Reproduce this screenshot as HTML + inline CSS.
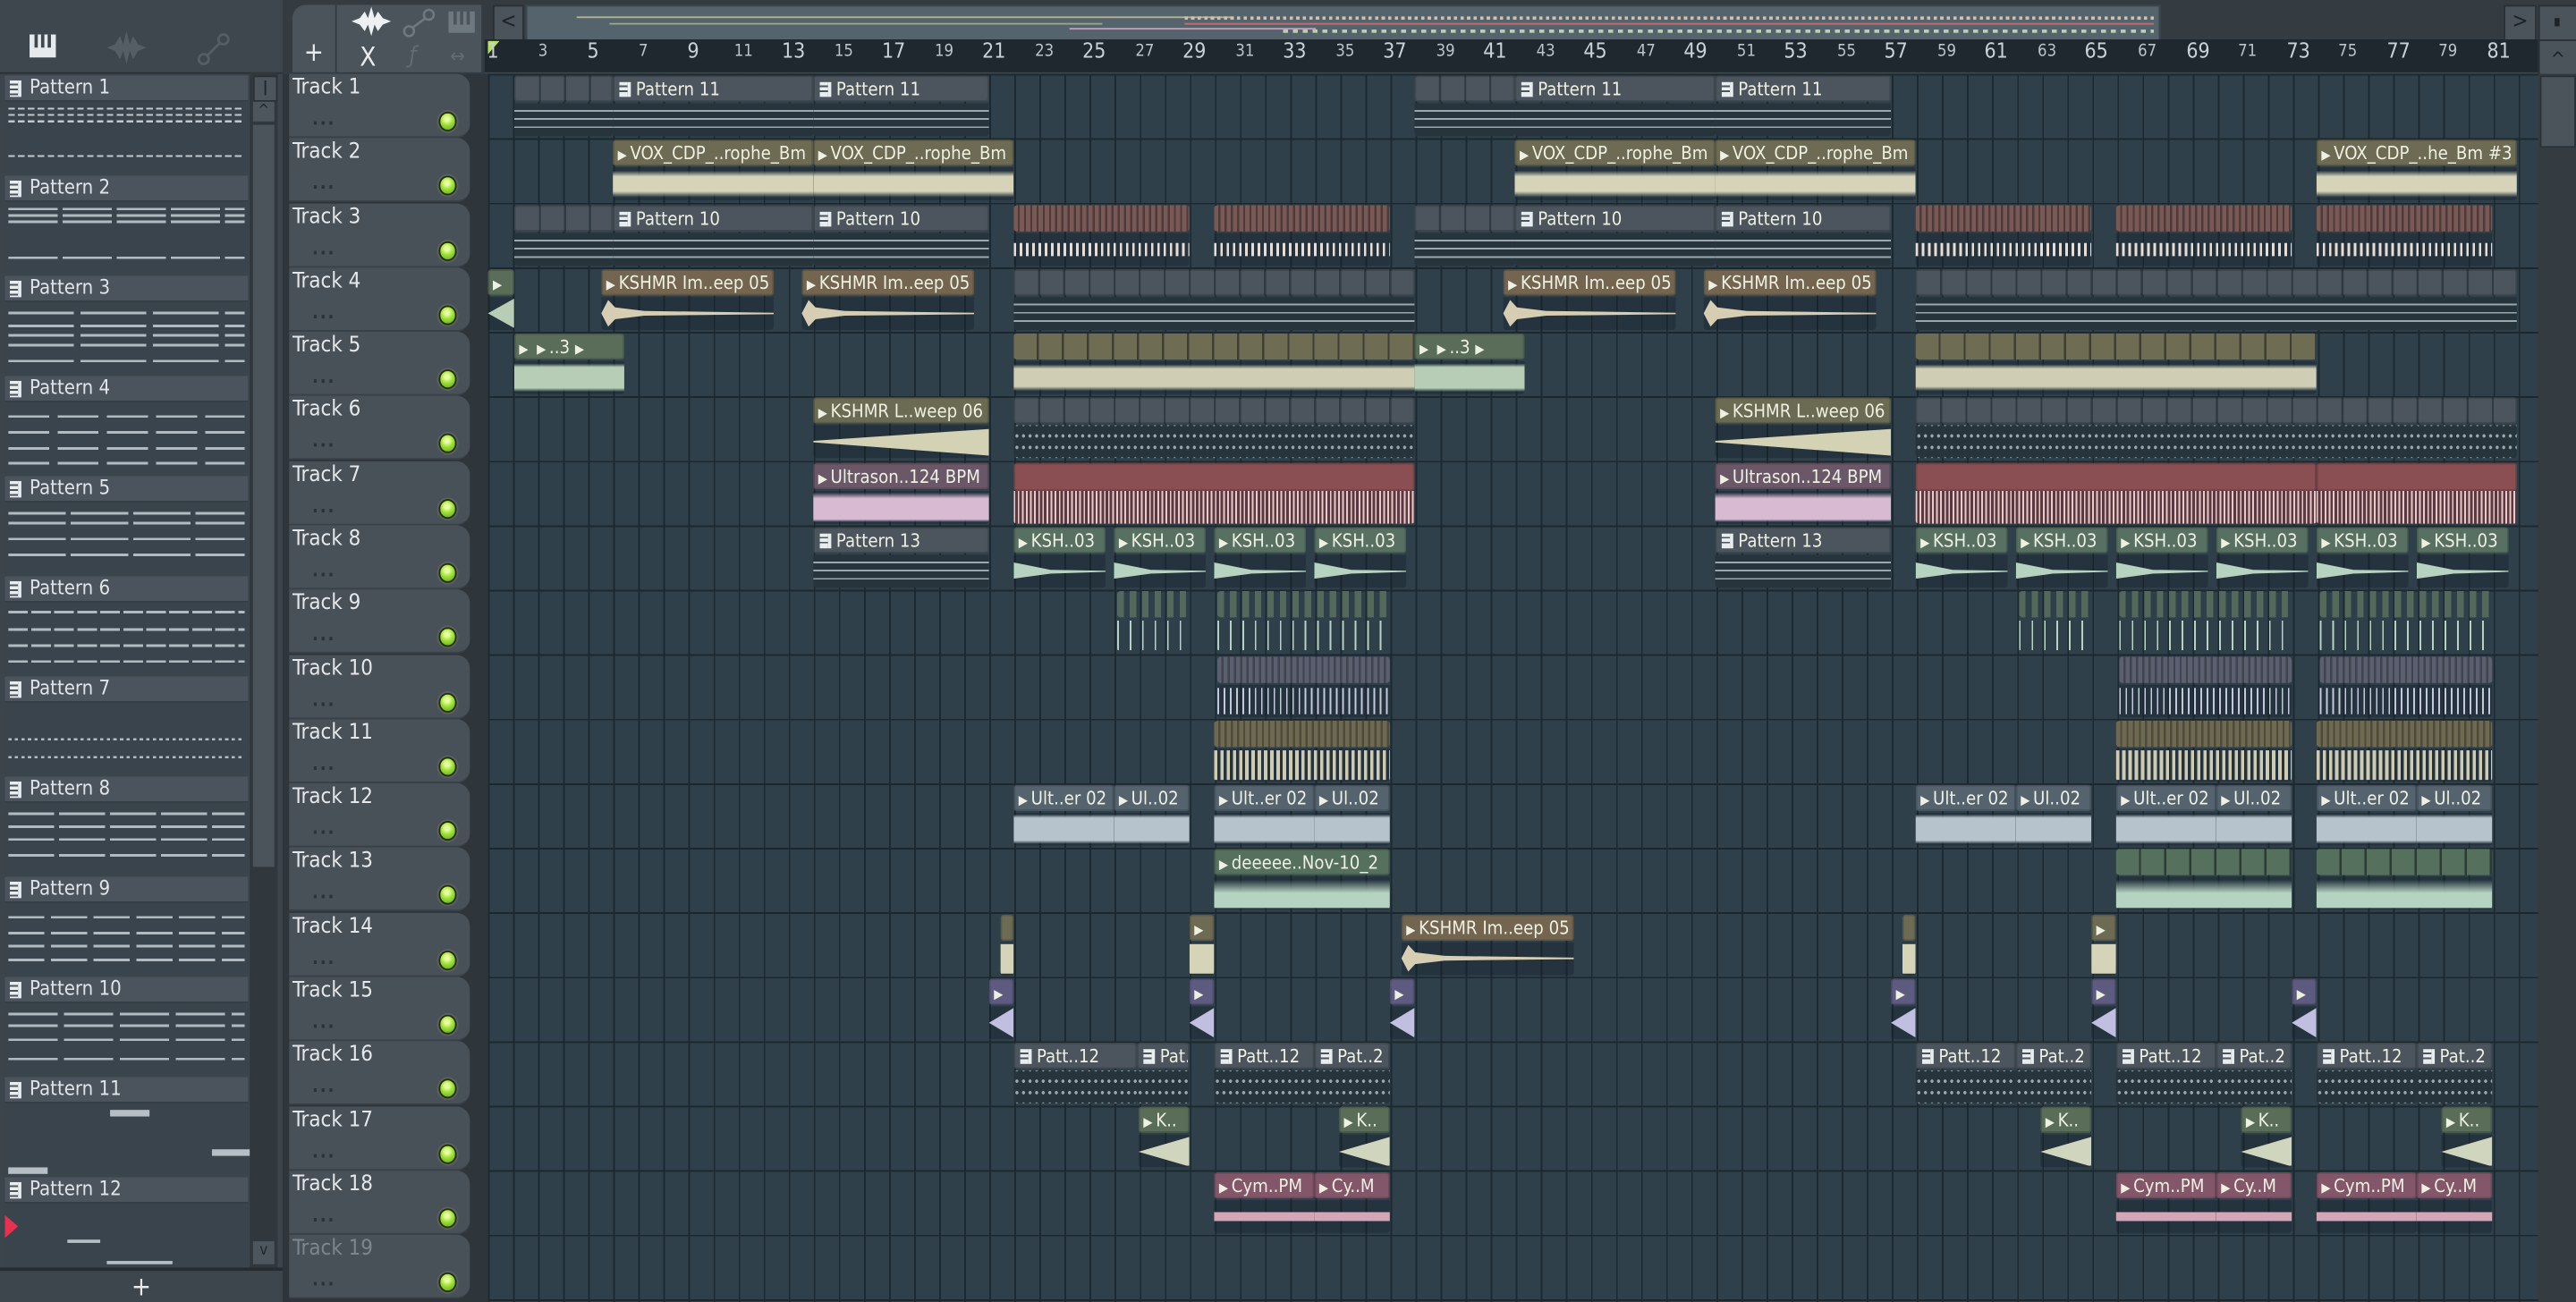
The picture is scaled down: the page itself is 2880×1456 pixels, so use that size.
<!DOCTYPE html>
<html><head><meta charset="utf-8">
<style>
html,body{margin:0;padding:0;background:#2f3a41;overflow:hidden;width:2880px;height:1456px}
#s{position:absolute;left:0;top:0;width:1568px;height:793px;transform:scale(1.83674,1.83607);transform-origin:0 0;background:#343c43;font-family:"DejaVu Sans Condensed","Liberation Sans Narrow","Liberation Sans",sans-serif;font-stretch:condensed;overflow:hidden}
.a{position:absolute}
#lp{left:0;top:0;width:172px;height:793px;background:#3c454c}
#lptop{left:0;top:0;width:172px;height:44px;background:#3f474e;border-bottom:1px solid #2a3137}
.pt{position:absolute;left:3px;width:148px;height:59px;background:#3a444c}
.pt .ph{height:15px;background:#4b545c;border-bottom:1px solid #343d44;color:#dfe4e8;font-size:12px;line-height:15px;padding-left:15px;position:relative}
.pi{position:absolute;left:3px;top:3px;width:7px;height:10px;background:linear-gradient(#e8edf0 0 2px,#4b545c 2px 3px,#e8edf0 3px 5px,#4b545c 5px 6px,#e8edf0 6px 8px,#4b545c 8px 9px,#e8edf0 9px);border-right:2px solid #e8edf0;box-sizing:border-box}
.pb{position:absolute;left:2px;right:2px;top:18px;bottom:2px}
.th{position:absolute;left:176px;width:110px;height:38px;background:#495158;border-radius:0 8px 8px 0;border-bottom:1px solid #3a4147}
.th .n{position:absolute;left:2px;top:1px;font-size:13px;color:#e4e8ea}
.th .d{position:absolute;left:14px;top:21px;font-size:11px;color:#2b3136;letter-spacing:1px;font-weight:bold}
.th .l{position:absolute;left:91px;top:23px;width:9px;height:10px;border-radius:50%;background:radial-gradient(circle at 45% 35%,#e9ffa0 0 15%,#9de23a 45%,#5fa010 100%);border:1px solid #263000;box-shadow:0 0 0 1px #5a6268}
#g{left:297px;top:45px;width:1248px;height:748px;background-color:#2f404b;
background-image:repeating-linear-gradient(90deg,#1d2930 0 1px,transparent 1px 15.26px),repeating-linear-gradient(180deg,#1c272e 0 1px,transparent 1px 39.28px);overflow:hidden}
.r{position:absolute;left:0;width:1248px;height:39.28px}
.c{position:absolute;top:1px;height:37px;overflow:hidden;border-radius:2px}
.c .h{position:absolute;left:0;right:0;top:0;height:16px;font-size:11px;line-height:16px;color:#eef0e2;padding-left:2px;white-space:nowrap;overflow:hidden;border-radius:2px;box-sizing:border-box;border:1px solid rgba(0,0,0,.15)}
.c .b{position:absolute;top:17px;left:0;right:0;bottom:0;background:rgba(25,36,44,.45)}
.w{position:absolute;left:0;right:0;top:1px;bottom:1px}
.ic{font-size:8px;margin-right:2px}
.p .h{background:#4c555d;padding-left:13px}
.p .h:before{content:"";position:absolute;left:3px;top:3px;width:7px;height:9px;background:linear-gradient(#e8edf0 0 2px,#4c555d 2px 3px,#e8edf0 3px 5px,#4c555d 5px 6px,#e8edf0 6px);border-right:2px solid #e8edf0;box-sizing:border-box}
.p .b{background:#27343c;background-image:linear-gradient(transparent 20%,#9aa7b0 20% 25%,transparent 25% 45%,#9aa7b0 45% 50%,transparent 50% 70%,#9aa7b0 70% 75%,transparent 75%)}
.pd .b{background:#27343c;background-image:radial-gradient(circle,#9aa7b0 0 1px,transparent 1px);background-size:4px 7px;background-position:0 3px}
.pm .h{background:repeating-linear-gradient(90deg,#4c555d 0 14px,#2f3a42 14px 15.26px);padding-left:0}
.pm .h:before{display:none}
.vox .h{background:#6d6b53}.vox .w{background:linear-gradient(transparent 5%,#d5d3b8 25% 75%,transparent 95%)}
.ksi .h{background:#73654f}.ksi .w{background:#d6cdb3;clip-path:polygon(0 50%,4% 5%,8% 30%,25% 42%,100% 48%,100% 53%,25% 58%,8% 70%,4% 95%)}
.ksl .h{background:#6b6a52}.ksl .w{background:#d3d2b5;clip-path:polygon(0 45%,100% 5%,100% 95%,0 50%)}
.g .h{background:#596d58}.g .w{background:linear-gradient(transparent 2%,#b8cdb6 15% 85%,transparent 98%)}
.gd .h{background:#596d58}.gd .w{background:#b8cdb6;clip-path:polygon(0 50%,100% 0,100% 100%)}
.k3 .h{background:#587062}.k3 .w{background:#b6d2c1;clip-path:polygon(0 20%,40% 45%,100% 48%,100% 52%,40% 58%,0 75%)}
.ul .h{background:#6a5868}.ul .w{background:linear-gradient(transparent 0%,#d9bad3 20% 90%,transparent 100%)}
.ue .h{background:#55636e}.ue .w{background:linear-gradient(transparent 0%,#b7c3cc 12% 88%,transparent 100%)}
.de .h{background:#56705e}.de .w{background:linear-gradient(transparent 5%,#b6d3c2 50%)}
.cy .h{background:#83566a}.cy .w{background:linear-gradient(transparent 35%,#d3a6b8 35% 65%,transparent 65%)}
.pr .h{background:#5d5c80}.pr .w{background:#c0bfe0;clip-path:polygon(0 50%,100% 0,100% 100%)}
.red .h{background:#8a4f53;height:17px}.red .b{background:repeating-linear-gradient(90deg,#e8c8c8 0 1px,#5a3a40 1px 2.5px)}
.br .h{background:repeating-linear-gradient(90deg,#7a5853 0 2.5px,#4a3c3c 2.5px 3.8px);border:0}.br .w{top:6px;bottom:6px;background:repeating-linear-gradient(90deg,#e8dcd6 0 1.5px,transparent 1.5px 3.8px)}
.ol .h{background:repeating-linear-gradient(90deg,#6e6a52 0 2.5px,#4d4b3c 2.5px 3.8px);border:0}.ol .w{top:1px;bottom:1px;background:repeating-linear-gradient(90deg,#cfcbb1 0 2px,transparent 2px 3.8px)}
.pu .h{background:repeating-linear-gradient(90deg,#5b5f70 0 2.5px,#40444f 2.5px 3.8px);border:0}.pu .w{top:2px;bottom:2px;background:repeating-linear-gradient(90deg,#c5c8dc 0 1px,transparent 1px 3.8px)}
.gb .h{background:repeating-linear-gradient(90deg,#54695a 0 4px,transparent 4px 7.6px);border:0}.gb .b{background:transparent}.gb .w{background:repeating-linear-gradient(90deg,#b6d2c1 0 1px,transparent 1px 7.6px)}
.gm .h{background:repeating-linear-gradient(90deg,#6e6c53 0 14px,#3b3f35 14px 15.26px);border:0}
.gm .w{background:linear-gradient(transparent 5%,#cfceb5 20% 80%,transparent 95%)}
.sm .h{background:repeating-linear-gradient(90deg,#56705e 0 14px,#2f3a36 14px 15.26px);border:0}
.ru{position:absolute;top:26px;font-size:10px;color:#b9c4cb;transform:translateX(-50%)}
.ru.big{font-size:12.5px;top:23px;color:#c8d2d8}
</style></head><body><div id="s">

<div id="lp" class="a"></div>
<div id="lptop" class="a">
 <div class="a" style="left:18px;top:21px;width:16px;height:14px;background:#e6eaec"><div class="a" style="left:3px;top:0;width:2px;height:8px;background:#3f474e"></div><div class="a" style="left:7px;top:0;width:2px;height:8px;background:#3f474e"></div><div class="a" style="left:11px;top:0;width:2px;height:8px;background:#3f474e"></div></div>
 <svg class="a" style="left:64px;top:18px" width="26" height="22" viewBox="0 0 26 22"><path d="M1 11 L6 9 L9 4 L11 9 L13 1 L15 9 L17 4 L20 9 L25 11 L20 13 L17 18 L15 13 L13 21 L11 13 L9 18 L6 13 Z" fill="#555e65"/></svg>
 <svg class="a" style="left:120px;top:20px" width="20" height="20" viewBox="0 0 20 20"><circle cx="4" cy="16" r="3" fill="none" stroke="#555e65" stroke-width="1.5"/><circle cx="16" cy="4" r="3" fill="none" stroke="#555e65" stroke-width="1.5"/><line x1="6" y1="14" x2="14" y2="6" stroke="#555e65" stroke-width="1.5"/></svg>
</div>
<div class="pt" style="top:46px"><div class="ph"><span class="pi"></span>Pattern 1</div><div class="pb" style="background:linear-gradient(transparent 4%,#c0c8ce 4% 7%,transparent 7% 14%,#c0c8ce 14% 17%,transparent 17% 24%,#c0c8ce 24% 27%,transparent 27% 78%,#c0c8ce 78% 81%,transparent 81%);-webkit-mask:repeating-linear-gradient(90deg,#000 0 4px,transparent 4px 6px)"></div></div>
<div class="pt" style="top:107px"><div class="ph"><span class="pi"></span>Pattern 2</div><div class="pb" style="background:linear-gradient(transparent 4%,#b0bac0 4% 8%,transparent 8% 14%,#b0bac0 14% 18%,transparent 18% 24%,#b0bac0 24% 28%,transparent 28% 80%,#b0bac0 80% 84%,transparent 84%);-webkit-mask:repeating-linear-gradient(90deg,#000 0 30px,transparent 30px 33px)"></div></div>
<div class="pt" style="top:168px"><div class="ph"><span class="pi"></span>Pattern 3</div><div class="pb" style="background:linear-gradient(transparent 10%,#b0bac0 10% 14%,transparent 14% 30%,#b0bac0 30% 34%,transparent 34% 45%,#b0bac0 45% 49%,transparent 49% 60%,#b0bac0 60% 64%,transparent 64% 85%,#b0bac0 85% 89%,transparent 89%);-webkit-mask:repeating-linear-gradient(90deg,#000 0 40px,transparent 40px 44px)"></div></div>
<div class="pt" style="top:229px"><div class="ph"><span class="pi"></span>Pattern 4</div><div class="pb" style="background:linear-gradient(transparent 15%,#b0bac0 15% 19%,transparent 19% 40%,#b0bac0 40% 44%,transparent 44% 65%,#b0bac0 65% 69%,transparent 69% 88%,#b0bac0 88% 92%,transparent 92%);-webkit-mask:repeating-linear-gradient(90deg,#000 0 25px,transparent 25px 30px)"></div></div>
<div class="pt" style="top:290px"><div class="ph"><span class="pi"></span>Pattern 5</div><div class="pb" style="background:linear-gradient(transparent 10%,#b0bac0 10% 14%,transparent 14% 25%,#b0bac0 25% 29%,transparent 29% 50%,#b0bac0 50% 54%,transparent 54% 75%,#b0bac0 75% 79%,transparent 79%);-webkit-mask:repeating-linear-gradient(90deg,#000 0 35px,transparent 35px 38px)"></div></div>
<div class="pt" style="top:351px"><div class="ph"><span class="pi"></span>Pattern 6</div><div class="pb" style="background:linear-gradient(transparent 8%,#b0bac0 8% 12%,transparent 12% 35%,#b0bac0 35% 39%,transparent 39% 60%,#b0bac0 60% 64%,transparent 64% 85%,#b0bac0 85% 89%,transparent 89%);-webkit-mask:repeating-linear-gradient(90deg,#000 0 12px,transparent 12px 14px)"></div></div>
<div class="pt" style="top:412px"><div class="ph"><span class="pi"></span>Pattern 7</div><div class="pb" style="background:linear-gradient(transparent 50%,#b0bac0 50% 54%,transparent 54% 78%,#b0bac0 78% 82%,transparent 82%);-webkit-mask:repeating-linear-gradient(90deg,#000 0 2px,transparent 2px 4px)"></div></div>
<div class="pt" style="top:473px"><div class="ph"><span class="pi"></span>Pattern 8</div><div class="pb" style="background:linear-gradient(transparent 10%,#b0bac0 10% 14%,transparent 14% 30%,#b0bac0 30% 34%,transparent 34% 50%,#b0bac0 50% 54%,transparent 54% 75%,#b0bac0 75% 79%,transparent 79%);-webkit-mask:repeating-linear-gradient(90deg,#000 0 28px,transparent 28px 31px)"></div></div>
<div class="pt" style="top:534px"><div class="ph"><span class="pi"></span>Pattern 9</div><div class="pb" style="background:linear-gradient(transparent 15%,#b0bac0 15% 19%,transparent 19% 40%,#b0bac0 40% 44%,transparent 44% 60%,#b0bac0 60% 64%,transparent 64% 82%,#b0bac0 82% 86%,transparent 86%);-webkit-mask:repeating-linear-gradient(90deg,#000 0 22px,transparent 22px 26px)"></div></div>
<div class="pt" style="top:595px"><div class="ph"><span class="pi"></span>Pattern 10</div><div class="pb" style="background:linear-gradient(transparent 10%,#b0bac0 10% 14%,transparent 14% 28%,#b0bac0 28% 32%,transparent 32% 50%,#b0bac0 50% 54%,transparent 54% 80%,#b0bac0 80% 84%,transparent 84%);-webkit-mask:repeating-linear-gradient(90deg,#000 0 30px,transparent 30px 34px)"></div></div>
<div class="pt" style="top:656px"><div class="ph"><span class="pi"></span>Pattern 11</div><div class="pb"><div class="a" style="left:62px;top:2px;width:24px;height:4px;background:#b5bfc5"></div><div class="a" style="left:124px;top:26px;width:24px;height:4px;background:#b5bfc5"></div><div class="a" style="left:0;top:37px;width:24px;height:4px;background:#b5bfc5"></div></div></div>
<div class="pt" style="top:717px;height:54px"><div class="ph"><span class="pi"></span>Pattern 12</div><div class="pb"><div class="a" style="left:36px;top:20px;width:20px;height:2px;background:#b5bfc5"></div><div class="a" style="left:60px;top:33px;width:40px;height:2px;background:#b5bfc5"></div></div></div>
<div class="a" style="left:3px;top:740px;width:0;height:0;border-left:8px solid #e83050;border-top:7px solid transparent;border-bottom:7px solid transparent"></div>
<div class="a" style="left:152px;top:44px;width:17px;height:728px;background:#30383e"></div>
<div class="a" style="left:154px;top:46px;width:13px;height:14px;background:#4d565d;border:1px solid #2a3136"><div class="a" style="left:6px;top:2px;width:1px;height:9px;background:#20272b"></div></div>
<div class="a" style="left:154px;top:62px;width:13px;height:12px;background:#4d565d;color:#20272b;font-size:9px;text-align:center;line-height:12px">^</div>
<div class="a" style="left:154px;top:76px;width:13px;height:452px;background:#4b545b"></div>
<div class="a" style="left:154px;top:756px;width:13px;height:14px;background:#4d565d;color:#20272b;font-size:9px;text-align:center;line-height:12px">v</div>
<div class="a" style="left:0;top:772px;width:172px;height:21px;background:#3d464d;border-top:2px solid #262d32;color:#e6eaec;font-size:16px;text-align:center;line-height:20px">+</div>

<div class="a" style="left:172px;top:0;width:1396px;height:45px;background:#343c42"></div>
<div class="a" style="left:178px;top:3px;width:26px;height:41px;background:#4b545b;border-radius:8px 0 0 0;color:#e8ecee;font-size:16px;text-align:center;line-height:58px">+</div>
<div class="a" style="left:205px;top:3px;width:88px;height:41px;background:#4b545b"></div>
<svg class="a" style="left:213px;top:4px" width="26" height="18" viewBox="0 0 26 18"><path d="M1 9 L6 7 L9 3 L11 7 L13 0 L15 7 L17 3 L20 7 L25 9 L20 11 L17 15 L15 11 L13 18 L11 11 L9 15 L6 11 Z" fill="#eef1f3"/></svg>
<svg class="a" style="left:245px;top:5px" width="20" height="18" viewBox="0 0 20 18"><circle cx="4" cy="14" r="3" fill="none" stroke="#6e787f" stroke-width="1.4"/><circle cx="16" cy="4" r="3" fill="none" stroke="#6e787f" stroke-width="1.4"/><line x1="6" y1="12" x2="14" y2="6" stroke="#6e787f" stroke-width="1.4"/></svg>
<div class="a" style="left:273px;top:7px;width:16px;height:13px;background:#6e787f"><div class="a" style="left:3px;top:0;width:2px;height:8px;background:#4b545b"></div><div class="a" style="left:7px;top:0;width:2px;height:8px;background:#4b545b"></div><div class="a" style="left:11px;top:0;width:2px;height:8px;background:#4b545b"></div></div>
<div class="a" style="left:219px;top:25px;color:#e8ecee;font-size:16px">X</div>
<div class="a" style="left:249px;top:26px;color:#626c73;font-size:14px;font-style:italic">ƒ</div>
<div class="a" style="left:274px;top:27px;color:#626c73;font-size:12px">↔</div>
<div class="a" style="left:300px;top:3px;width:17px;height:20px;background:#4b545b;border:1px solid #2a3136;color:#1d2327;font-size:13px;text-align:center;line-height:20px">&lt;</div>
<div class="a" style="left:320px;top:3px;width:993px;height:20px;background:#55636c;border:1px solid #3b464d">
 <div class="a" style="left:30px;top:6px;width:400px;height:1px;background:#b5b58a"></div>
 <div class="a" style="left:50px;top:10px;width:300px;height:1px;background:#9aa98a"></div>
 <div class="a" style="left:330px;top:13px;width:150px;height:1px;background:#c0a0b8"></div>
 <div class="a" style="left:400px;top:6px;width:590px;height:2px;background:repeating-linear-gradient(90deg,#d0c0b0 0 2px,transparent 2px 4px)"></div>
 <div class="a" style="left:400px;top:10px;width:590px;height:1px;background:#c07070"></div>
 <div class="a" style="left:460px;top:14px;width:530px;height:2px;background:repeating-linear-gradient(90deg,#bcd0b0 0 3px,transparent 3px 6px)"></div>
</div>
<div class="a" style="left:1524px;top:3px;width:18px;height:20px;background:#4b545b;border:1px solid #2a3136;color:#1d2327;font-size:13px;text-align:center;line-height:20px">&gt;</div>
<div class="a" style="left:1545px;top:3px;width:22px;height:20px;background:#4b545b;border:1px solid #2a3136"><div class="a" style="left:9px;top:7px;width:3px;height:5px;background:#1d2327"></div></div>

<div class="a" style="left:295px;top:24px;width:1250px;height:20px;background:#1f282e;border-bottom:2px solid #3a454c"></div>
<div class="a" style="left:297px;top:25px;width:0;height:0;border-left:7px solid #b6e060;border-bottom:8px solid transparent"></div>
<span class="ru big" style="left:300px">1</span><span class="ru" style="left:330.5px">3</span><span class="ru big" style="left:361px">5</span><span class="ru" style="left:391.6px">7</span><span class="ru big" style="left:422px">9</span><span class="ru" style="left:452.6px">11</span><span class="ru big" style="left:483px">13</span><span class="ru" style="left:513.6px">15</span><span class="ru big" style="left:544px">17</span><span class="ru" style="left:574.7px">19</span><span class="ru big" style="left:605px">21</span><span class="ru" style="left:635.7px">23</span><span class="ru big" style="left:666px">25</span><span class="ru" style="left:696.8px">27</span><span class="ru big" style="left:727px">29</span><span class="ru" style="left:757.8px">31</span><span class="ru big" style="left:788px">33</span><span class="ru" style="left:818.8px">35</span><span class="ru big" style="left:849px">37</span><span class="ru" style="left:879.9px">39</span><span class="ru big" style="left:910px">41</span><span class="ru" style="left:940.9px">43</span><span class="ru big" style="left:971px">45</span><span class="ru" style="left:1002px">47</span><span class="ru big" style="left:1032px">49</span><span class="ru" style="left:1063px">51</span><span class="ru big" style="left:1093px">53</span><span class="ru" style="left:1124px">55</span><span class="ru big" style="left:1154px">57</span><span class="ru" style="left:1185px">59</span><span class="ru big" style="left:1215px">61</span><span class="ru" style="left:1246px">63</span><span class="ru big" style="left:1276px">65</span><span class="ru" style="left:1307px">67</span><span class="ru big" style="left:1338px">69</span><span class="ru" style="left:1368px">71</span><span class="ru big" style="left:1399px">73</span><span class="ru" style="left:1429px">75</span><span class="ru big" style="left:1460px">77</span><span class="ru" style="left:1490px">79</span><span class="ru big" style="left:1521px">81</span>
<div class="a" style="left:1545px;top:24px;width:22px;height:20px;background:#4b545b;border:1px solid #2a3136;color:#1d2327;font-size:12px;text-align:center;line-height:22px">^</div>
<div class="a" style="left:1545px;top:45px;width:23px;height:748px;background:#343c42"></div>
<div class="a" style="left:1546px;top:46px;width:20px;height:42px;background:#4b545b;border:1px solid #2a3136"></div>

<div class="a" style="left:172px;top:45px;width:125px;height:748px;background:#2e363c"></div>
<div class="th" style="top:45px"><span class="n">Track 1</span><span class="d">...</span><span class="l"></span></div>
<div class="th" style="top:84.3px"><span class="n">Track 2</span><span class="d">...</span><span class="l"></span></div>
<div class="th" style="top:123.6px"><span class="n">Track 3</span><span class="d">...</span><span class="l"></span></div>
<div class="th" style="top:162.8px"><span class="n">Track 4</span><span class="d">...</span><span class="l"></span></div>
<div class="th" style="top:202.1px"><span class="n">Track 5</span><span class="d">...</span><span class="l"></span></div>
<div class="th" style="top:241.4px"><span class="n">Track 6</span><span class="d">...</span><span class="l"></span></div>
<div class="th" style="top:280.7px"><span class="n">Track 7</span><span class="d">...</span><span class="l"></span></div>
<div class="th" style="top:320px"><span class="n">Track 8</span><span class="d">...</span><span class="l"></span></div>
<div class="th" style="top:359.2px"><span class="n">Track 9</span><span class="d">...</span><span class="l"></span></div>
<div class="th" style="top:398.5px"><span class="n">Track 10</span><span class="d">...</span><span class="l"></span></div>
<div class="th" style="top:437.8px"><span class="n">Track 11</span><span class="d">...</span><span class="l"></span></div>
<div class="th" style="top:477.1px"><span class="n">Track 12</span><span class="d">...</span><span class="l"></span></div>
<div class="th" style="top:516.4px"><span class="n">Track 13</span><span class="d">...</span><span class="l"></span></div>
<div class="th" style="top:555.6px"><span class="n">Track 14</span><span class="d">...</span><span class="l"></span></div>
<div class="th" style="top:594.9px"><span class="n">Track 15</span><span class="d">...</span><span class="l"></span></div>
<div class="th" style="top:634.2px"><span class="n">Track 16</span><span class="d">...</span><span class="l"></span></div>
<div class="th" style="top:673.5px"><span class="n">Track 17</span><span class="d">...</span><span class="l"></span></div>
<div class="th" style="top:712.8px"><span class="n">Track 18</span><span class="d">...</span><span class="l"></span></div>
<div class="th" style="top:752px"><span class="n" style="color:#7d868c">Track 19</span><span class="d">...</span><span class="l"></span></div>

<div id="g" class="a">
<div class="r" style="top:0">
<div class="c p pm" style="left:16px;width:60px"><div class="h"></div><div class="b"></div></div>
<div class="c p" style="left:76px;width:122px"><div class="h">Pattern 11</div><div class="b"></div></div>
<div class="c p" style="left:198px;width:107px"><div class="h">Pattern 11</div><div class="b"></div></div>
<div class="c p pm" style="left:564px;width:61px"><div class="h"></div><div class="b"></div></div>
<div class="c p" style="left:625px;width:122px"><div class="h">Pattern 11</div><div class="b"></div></div>
<div class="c p" style="left:747px;width:107px"><div class="h">Pattern 11</div><div class="b"></div></div>
</div>
<div class="r" style="top:39.28px">
<div class="c vox" style="left:76px;width:122px"><div class="h"><span class="ic">▶</span>VOX_CDP_..rophe_Bm</div><div class="b"><div class="w"></div></div></div>
<div class="c vox" style="left:198px;width:122px"><div class="h"><span class="ic">▶</span>VOX_CDP_..rophe_Bm</div><div class="b"><div class="w"></div></div></div>
<div class="c vox" style="left:625px;width:122px"><div class="h"><span class="ic">▶</span>VOX_CDP_..rophe_Bm</div><div class="b"><div class="w"></div></div></div>
<div class="c vox" style="left:747px;width:122px"><div class="h"><span class="ic">▶</span>VOX_CDP_..rophe_Bm</div><div class="b"><div class="w"></div></div></div>
<div class="c vox" style="left:1113px;width:122px"><div class="h"><span class="ic">▶</span>VOX_CDP_..he_Bm #3</div><div class="b"><div class="w"></div></div></div>
</div>
<div class="r" style="top:78.56px">
<div class="c p pm" style="left:16px;width:60px"><div class="h"></div><div class="b"></div></div>
<div class="c p" style="left:76px;width:122px"><div class="h">Pattern 10</div><div class="b"></div></div>
<div class="c p" style="left:198px;width:107px"><div class="h">Pattern 10</div><div class="b"></div></div>
<div class="c br" style="left:320px;width:107px"><div class="h"></div><div class="b"><div class="w"></div></div></div>
<div class="c br" style="left:442px;width:107px"><div class="h"></div><div class="b"><div class="w"></div></div></div>
<div class="c p pm" style="left:564px;width:61px"><div class="h"></div><div class="b"></div></div>
<div class="c p" style="left:625px;width:122px"><div class="h">Pattern 10</div><div class="b"></div></div>
<div class="c p" style="left:747px;width:107px"><div class="h">Pattern 10</div><div class="b"></div></div>
<div class="c br" style="left:869px;width:107px"><div class="h"></div><div class="b"><div class="w"></div></div></div>
<div class="c br" style="left:991px;width:107px"><div class="h"></div><div class="b"><div class="w"></div></div></div>
<div class="c br" style="left:1113px;width:107px"><div class="h"></div><div class="b"><div class="w"></div></div></div>
</div>
<div class="r" style="top:117.84px">
<div class="c gd" style="left:0;width:16px"><div class="h"><span class="ic">▶</span></div><div class="b"><div class="w"></div></div></div>
<div class="c ksi" style="left:69px;width:105px"><div class="h"><span class="ic">▶</span>KSHMR Im..eep 05</div><div class="b"><div class="w"></div></div></div>
<div class="c ksi" style="left:191px;width:105px"><div class="h"><span class="ic">▶</span>KSHMR Im..eep 05</div><div class="b"><div class="w"></div></div></div>
<div class="c p pm" style="left:320px;width:244px"><div class="h"></div><div class="b"></div></div>
<div class="c ksi" style="left:618px;width:105px"><div class="h"><span class="ic">▶</span>KSHMR Im..eep 05</div><div class="b"><div class="w"></div></div></div>
<div class="c ksi" style="left:740px;width:105px"><div class="h"><span class="ic">▶</span>KSHMR Im..eep 05</div><div class="b"><div class="w"></div></div></div>
<div class="c p pm" style="left:869px;width:366px"><div class="h"></div><div class="b"></div></div>
</div>
<div class="r" style="top:157.12px">
<div class="c g" style="left:16px;width:67px"><div class="h"><span class="ic">▶</span> <span class="ic">▶</span>..3 <span class="ic">▶</span></div><div class="b"><div class="w"></div></div></div>
<div class="c gm" style="left:320px;width:244px"><div class="h"></div><div class="b"><div class="w"></div></div></div>
<div class="c g" style="left:564px;width:67px"><div class="h"><span class="ic">▶</span> <span class="ic">▶</span>..3 <span class="ic">▶</span></div><div class="b"><div class="w"></div></div></div>
<div class="c gm" style="left:869px;width:244px"><div class="h"></div><div class="b"><div class="w"></div></div></div>
</div>
<div class="r" style="top:196.4px">
<div class="c ksl" style="left:198px;width:107px"><div class="h"><span class="ic">▶</span>KSHMR L..weep 06</div><div class="b"><div class="w"></div></div></div>
<div class="c p pm pd" style="left:320px;width:244px"><div class="h"></div><div class="b"></div></div>
<div class="c ksl" style="left:747px;width:107px"><div class="h"><span class="ic">▶</span>KSHMR L..weep 06</div><div class="b"><div class="w"></div></div></div>
<div class="c p pm pd" style="left:869px;width:366px"><div class="h"></div><div class="b"></div></div>
</div>
<div class="r" style="top:235.68px">
<div class="c ul" style="left:198px;width:107px"><div class="h"><span class="ic">▶</span>Ultrason..124 BPM</div><div class="b"><div class="w"></div></div></div>
<div class="c red" style="left:320px;width:244px"><div class="h"></div><div class="b"></div></div>
<div class="c ul" style="left:747px;width:107px"><div class="h"><span class="ic">▶</span>Ultrason..124 BPM</div><div class="b"><div class="w"></div></div></div>
<div class="c red" style="left:869px;width:244px"><div class="h"></div><div class="b"></div></div>
<div class="c red" style="left:1113px;width:122px"><div class="h"></div><div class="b"></div></div>
</div>
<div class="r" style="top:274.96px">
<div class="c p" style="left:198px;width:107px"><div class="h">Pattern 13</div><div class="b"></div></div>
<div class="c k3" style="left:320px;width:56px"><div class="h"><span class="ic">▶</span>KSH..03</div><div class="b"><div class="w"></div></div></div>
<div class="c k3" style="left:381px;width:56px"><div class="h"><span class="ic">▶</span>KSH..03</div><div class="b"><div class="w"></div></div></div>
<div class="c k3" style="left:442px;width:56px"><div class="h"><span class="ic">▶</span>KSH..03</div><div class="b"><div class="w"></div></div></div>
<div class="c k3" style="left:503px;width:56px"><div class="h"><span class="ic">▶</span>KSH..03</div><div class="b"><div class="w"></div></div></div>
<div class="c p" style="left:747px;width:107px"><div class="h">Pattern 13</div><div class="b"></div></div>
<div class="c k3" style="left:869px;width:56px"><div class="h"><span class="ic">▶</span>KSH..03</div><div class="b"><div class="w"></div></div></div>
<div class="c k3" style="left:930px;width:56px"><div class="h"><span class="ic">▶</span>KSH..03</div><div class="b"><div class="w"></div></div></div>
<div class="c k3" style="left:991px;width:56px"><div class="h"><span class="ic">▶</span>KSH..03</div><div class="b"><div class="w"></div></div></div>
<div class="c k3" style="left:1052px;width:56px"><div class="h"><span class="ic">▶</span>KSH..03</div><div class="b"><div class="w"></div></div></div>
<div class="c k3" style="left:1113px;width:56px"><div class="h"><span class="ic">▶</span>KSH..03</div><div class="b"><div class="w"></div></div></div>
<div class="c k3" style="left:1174px;width:56px"><div class="h"><span class="ic">▶</span>KSH..03</div><div class="b"><div class="w"></div></div></div>
</div>
<div class="r" style="top:314.24px">
<div class="c gb" style="left:383px;width:44px"><div class="h"></div><div class="b"><div class="w"></div></div></div>
<div class="c gb" style="left:444px;width:105px"><div class="h"></div><div class="b"><div class="w"></div></div></div>
<div class="c gb" style="left:932px;width:44px"><div class="h"></div><div class="b"><div class="w"></div></div></div>
<div class="c gb" style="left:993px;width:105px"><div class="h"></div><div class="b"><div class="w"></div></div></div>
<div class="c gb" style="left:1115px;width:105px"><div class="h"></div><div class="b"><div class="w"></div></div></div>
</div>
<div class="r" style="top:353.52px">
<div class="c pu" style="left:444px;width:105px"><div class="h"></div><div class="b"><div class="w"></div></div></div>
<div class="c pu" style="left:993px;width:105px"><div class="h"></div><div class="b"><div class="w"></div></div></div>
<div class="c pu" style="left:1115px;width:105px"><div class="h"></div><div class="b"><div class="w"></div></div></div>
</div>
<div class="r" style="top:392.8px">
<div class="c ol" style="left:442px;width:107px"><div class="h"></div><div class="b"><div class="w"></div></div></div>
<div class="c ol" style="left:991px;width:107px"><div class="h"></div><div class="b"><div class="w"></div></div></div>
<div class="c ol" style="left:1113px;width:107px"><div class="h"></div><div class="b"><div class="w"></div></div></div>
</div>
<div class="r" style="top:432.08px">
<div class="c ue" style="left:320px;width:61px"><div class="h"><span class="ic">▶</span>Ult..er 02</div><div class="b"><div class="w"></div></div></div>
<div class="c ue" style="left:381px;width:46px"><div class="h"><span class="ic">▶</span>Ul..02</div><div class="b"><div class="w"></div></div></div>
<div class="c ue" style="left:442px;width:61px"><div class="h"><span class="ic">▶</span>Ult..er 02</div><div class="b"><div class="w"></div></div></div>
<div class="c ue" style="left:503px;width:46px"><div class="h"><span class="ic">▶</span>Ul..02</div><div class="b"><div class="w"></div></div></div>
<div class="c ue" style="left:869px;width:61px"><div class="h"><span class="ic">▶</span>Ult..er 02</div><div class="b"><div class="w"></div></div></div>
<div class="c ue" style="left:930px;width:46px"><div class="h"><span class="ic">▶</span>Ul..02</div><div class="b"><div class="w"></div></div></div>
<div class="c ue" style="left:991px;width:61px"><div class="h"><span class="ic">▶</span>Ult..er 02</div><div class="b"><div class="w"></div></div></div>
<div class="c ue" style="left:1052px;width:46px"><div class="h"><span class="ic">▶</span>Ul..02</div><div class="b"><div class="w"></div></div></div>
<div class="c ue" style="left:1113px;width:61px"><div class="h"><span class="ic">▶</span>Ult..er 02</div><div class="b"><div class="w"></div></div></div>
<div class="c ue" style="left:1174px;width:46px"><div class="h"><span class="ic">▶</span>Ul..02</div><div class="b"><div class="w"></div></div></div>
</div>
<div class="r" style="top:471.36px">
<div class="c de" style="left:442px;width:107px"><div class="h"><span class="ic">▶</span>deeeee..Nov-10_2</div><div class="b"><div class="w"></div></div></div>
<div class="c de sm" style="left:991px;width:107px"><div class="h"></div><div class="b"><div class="w"></div></div></div>
<div class="c de sm" style="left:1113px;width:107px"><div class="h"></div><div class="b"><div class="w"></div></div></div>
</div>
<div class="r" style="top:510.64px">
<div class="c vox" style="left:312px;width:8px"><div class="h"></div><div class="b"><div class="w" style="background:#d5d3b8"></div></div></div>
<div class="c vox" style="left:427px;width:15px"><div class="h"><span class="ic">▶</span></div><div class="b"><div class="w" style="background:#d5d3b8"></div></div></div>
<div class="c ksi" style="left:556px;width:105px"><div class="h"><span class="ic">▶</span>KSHMR Im..eep 05</div><div class="b"><div class="w"></div></div></div>
<div class="c vox" style="left:861px;width:8px"><div class="h"></div><div class="b"><div class="w" style="background:#d5d3b8"></div></div></div>
<div class="c vox" style="left:976px;width:15px"><div class="h"><span class="ic">▶</span></div><div class="b"><div class="w" style="background:#d5d3b8"></div></div></div>
</div>
<div class="r" style="top:549.92px">
<div class="c pr" style="left:305px;width:15px"><div class="h"><span class="ic">▶</span></div><div class="b"><div class="w"></div></div></div>
<div class="c pr" style="left:427px;width:15px"><div class="h"><span class="ic">▶</span></div><div class="b"><div class="w"></div></div></div>
<div class="c pr" style="left:549px;width:15px"><div class="h"><span class="ic">▶</span></div><div class="b"><div class="w"></div></div></div>
<div class="c pr" style="left:854px;width:15px"><div class="h"><span class="ic">▶</span></div><div class="b"><div class="w"></div></div></div>
<div class="c pr" style="left:976px;width:15px"><div class="h"><span class="ic">▶</span></div><div class="b"><div class="w"></div></div></div>
<div class="c pr" style="left:1098px;width:15px"><div class="h"><span class="ic">▶</span></div><div class="b"><div class="w"></div></div></div>
</div>
<div class="r" style="top:589.2px">
<div class="c p pd" style="left:320px;width:75px"><div class="h">Patt..12</div><div class="b"></div></div>
<div class="c p pd" style="left:395px;width:32px"><div class="h">Pat..2</div><div class="b"></div></div>
<div class="c p pd" style="left:442px;width:61px"><div class="h">Patt..12</div><div class="b"></div></div>
<div class="c p pd" style="left:503px;width:46px"><div class="h">Pat..2</div><div class="b"></div></div>
<div class="c p pd" style="left:869px;width:61px"><div class="h">Patt..12</div><div class="b"></div></div>
<div class="c p pd" style="left:930px;width:46px"><div class="h">Pat..2</div><div class="b"></div></div>
<div class="c p pd" style="left:991px;width:61px"><div class="h">Patt..12</div><div class="b"></div></div>
<div class="c p pd" style="left:1052px;width:46px"><div class="h">Pat..2</div><div class="b"></div></div>
<div class="c p pd" style="left:1113px;width:61px"><div class="h">Patt..12</div><div class="b"></div></div>
<div class="c p pd" style="left:1174px;width:46px"><div class="h">Pat..2</div><div class="b"></div></div>
</div>
<div class="r" style="top:628.48px">
<div class="c gd" style="left:396px;width:31px"><div class="h"><span class="ic">▶</span>K..</div><div class="b"><div class="w" style="background:#cfd6bd"></div></div></div>
<div class="c gd" style="left:518px;width:31px"><div class="h"><span class="ic">▶</span>K..</div><div class="b"><div class="w" style="background:#cfd6bd"></div></div></div>
<div class="c gd" style="left:945px;width:31px"><div class="h"><span class="ic">▶</span>K..</div><div class="b"><div class="w" style="background:#cfd6bd"></div></div></div>
<div class="c gd" style="left:1067px;width:31px"><div class="h"><span class="ic">▶</span>K..</div><div class="b"><div class="w" style="background:#cfd6bd"></div></div></div>
<div class="c gd" style="left:1189px;width:31px"><div class="h"><span class="ic">▶</span>K..</div><div class="b"><div class="w" style="background:#cfd6bd"></div></div></div>
</div>
<div class="r" style="top:667.76px">
<div class="c cy" style="left:442px;width:61px"><div class="h"><span class="ic">▶</span>Cym..PM</div><div class="b"><div class="w"></div></div></div>
<div class="c cy" style="left:503px;width:46px"><div class="h"><span class="ic">▶</span>Cy..M</div><div class="b"><div class="w"></div></div></div>
<div class="c cy" style="left:991px;width:61px"><div class="h"><span class="ic">▶</span>Cym..PM</div><div class="b"><div class="w"></div></div></div>
<div class="c cy" style="left:1052px;width:46px"><div class="h"><span class="ic">▶</span>Cy..M</div><div class="b"><div class="w"></div></div></div>
<div class="c cy" style="left:1113px;width:61px"><div class="h"><span class="ic">▶</span>Cym..PM</div><div class="b"><div class="w"></div></div></div>
<div class="c cy" style="left:1174px;width:46px"><div class="h"><span class="ic">▶</span>Cy..M</div><div class="b"><div class="w"></div></div></div>
</div>
</div>
</div></body></html>
